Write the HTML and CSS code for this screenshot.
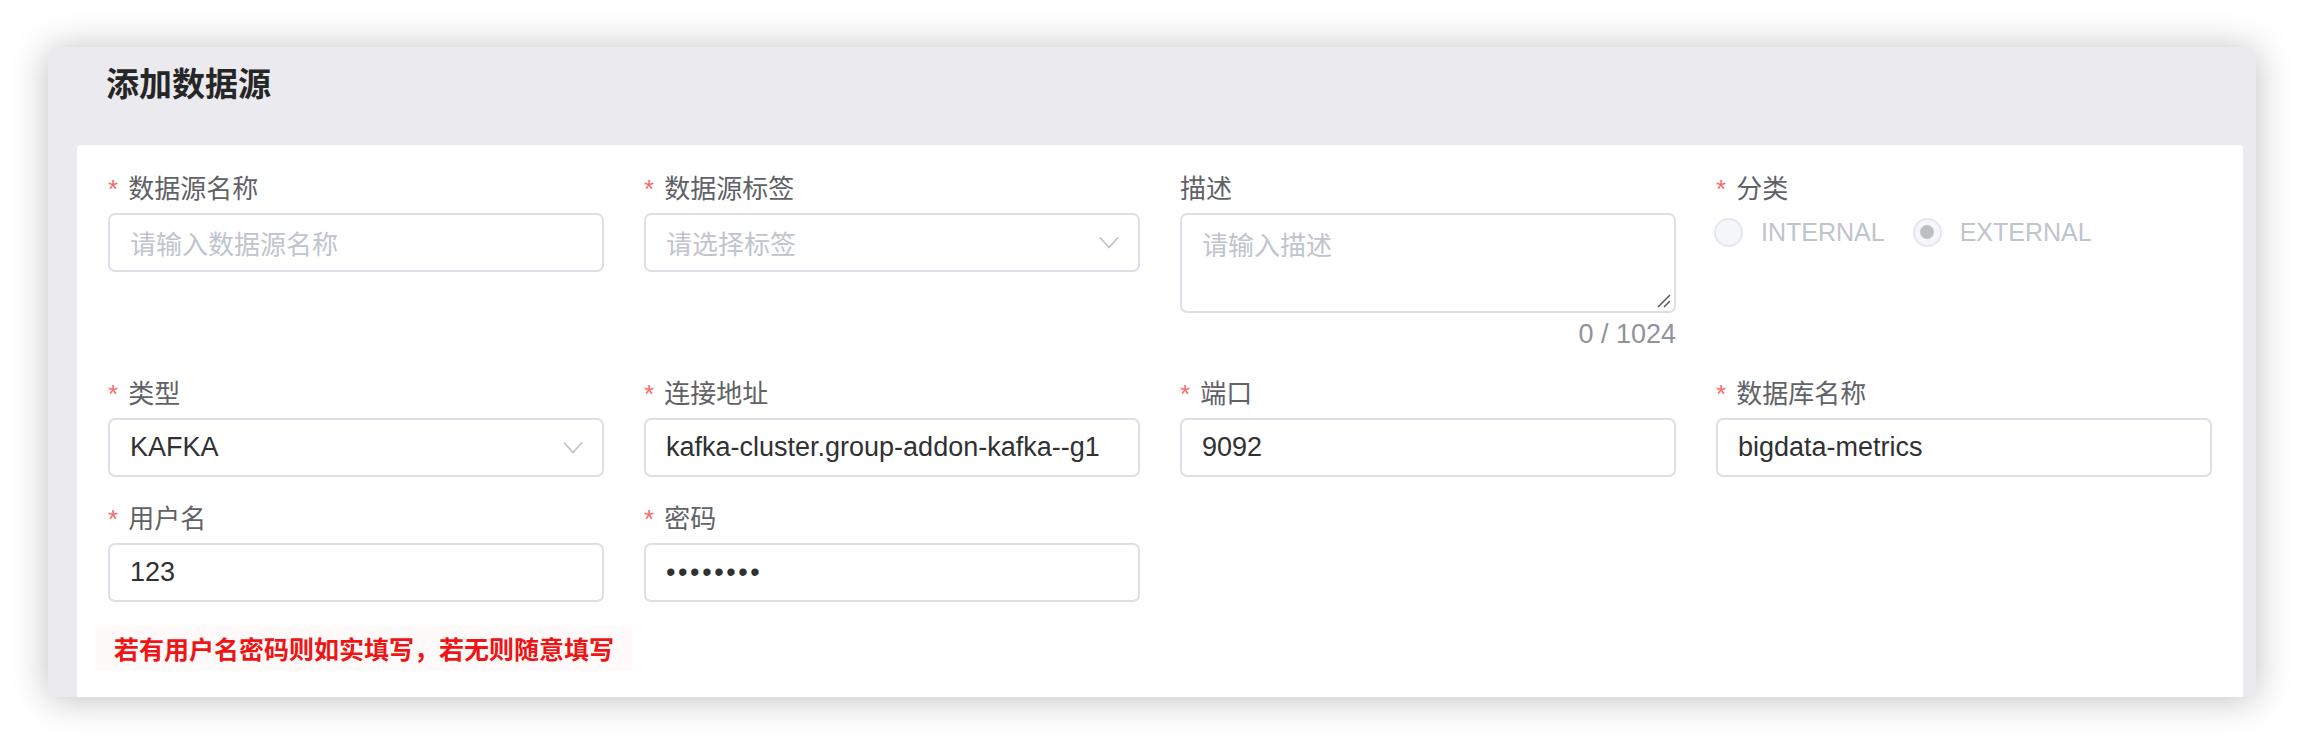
FILE: index.html
```html
<!DOCTYPE html>
<html lang="zh-CN">
<head>
<meta charset="utf-8">
<title>添加数据源</title>
<link rel="stylesheet" href="styles.css">
</head>
<body>
<div class="page">
  <div class="card">
    <div class="card-head"><h2 class="title">添加数据源</h2></div>
    <div class="panel">
      <div class="grid">
        <div class="item">
          <div class="label"><span class="star">*</span>数据源名称</div>
          <div class="input"><span class="ph">请输入数据源名称</span></div>
        </div>
        <div class="item">
          <div class="label"><span class="star">*</span>数据源标签</div>
          <div class="input select"><span class="val ph">请选择标签</span>
            <svg class="chev" width="20" height="13" viewBox="0 0 20 13"><polyline points="1,1.5 10,11.5 19,1.5" fill="none" stroke="#c0c4cc" stroke-width="1.8"/></svg>
          </div>
        </div>
        <div class="item">
          <div class="label">描述</div>
          <div class="textarea"><span class="ph">请输入描述</span>
            <svg class="grip" width="14" height="14" viewBox="0 0 14 14"><line x1="1" y1="13" x2="13" y2="1" stroke="#555" stroke-width="1.4"/><line x1="7" y1="13" x2="13" y2="7" stroke="#555" stroke-width="1.4"/></svg>
          </div>
          <div class="counter">0 / 1024</div>
        </div>
        <div class="item">
          <div class="label"><span class="star">*</span>分类</div>
          <div class="radios">
            <span class="radio"><span class="dot"></span><span class="rtext">INTERNAL</span></span>
            <span class="radio"><span class="dot checked"></span><span class="rtext">EXTERNAL</span></span>
          </div>
        </div>

        <div class="item">
          <div class="label"><span class="star">*</span>类型</div>
          <div class="input select"><span class="val">KAFKA</span>
            <svg class="chev" width="20" height="13" viewBox="0 0 20 13"><polyline points="1,1.5 10,11.5 19,1.5" fill="none" stroke="#c0c4cc" stroke-width="1.8"/></svg>
          </div>
        </div>
        <div class="item">
          <div class="label"><span class="star">*</span>连接地址</div>
          <div class="input"><span class="val">kafka-cluster.group-addon-kafka--g1</span></div>
        </div>
        <div class="item">
          <div class="label"><span class="star">*</span>端口</div>
          <div class="input"><span class="val">9092</span></div>
        </div>
        <div class="item">
          <div class="label"><span class="star">*</span>数据库名称</div>
          <div class="input"><span class="val">bigdata-metrics</span></div>
        </div>

        <div class="item">
          <div class="label"><span class="star">*</span>用户名</div>
          <div class="input"><span class="val">123</span></div>
        </div>
        <div class="item">
          <div class="label"><span class="star">*</span>密码</div>
          <div class="input"><span class="val pwd">••••••••</span></div>
        </div>
      </div>
      <div class="hint">若有用户名密码则如实填写，若无则随意填写</div>
    </div>
  </div>
</div>
</body>
</html>
```

FILE: styles.css
```css
html, body {
  margin: 0;
  padding: 0;
  background: #ffffff;
}
body {
  font-family: "Liberation Sans", "Noto Sans CJK SC", sans-serif;
  width: 2304px;
  height: 745px;
  overflow: hidden;
}
.page {
  padding: 47px 48px 0 48px;
}
.card {
  height: 650px;
  background: #ebeaef;
  border-radius: 10px;
  box-shadow: 0 2px 36px rgba(0, 0, 0, 0.26);
  padding: 0 13px 0 29px;
  display: flex;
  flex-direction: column;
  overflow: hidden;
}
.card-head {
  height: 98px;
  flex: none;
  box-sizing: border-box;
  padding: 15px 0 0 29px;
}
.title {
  margin: 0;
  font-family: "Noto Sans CJK SC", sans-serif;
  font-size: 33px;
  line-height: 40px;
  font-weight: 700;
  color: #262626;
}
.panel {
  flex: 1;
  background: #ffffff;
  border-radius: 4px 4px 0 0;
  padding: 26px 31px 0 31px;
}
.grid {
  display: grid;
  grid-template-columns: repeat(4, 496px);
  column-gap: 40px;
  align-items: start;
}
.item {
  margin-bottom: 24px;
}
.label {
  height: 36px;
  line-height: 36px;
  margin-bottom: 6px;
  font-size: 26px;
  color: #606266;
  white-space: nowrap;
}
.star {
  color: #f56c6c;
  margin-right: 10px;
}
.input {
  height: 59px;
  box-sizing: border-box;
  border: 2px solid #dcdfe6;
  border-radius: 7px;
  padding: 0 20px 0 20px;
  display: flex;
  align-items: center;
  font-size: 27px;
  color: #303133;
  background: #fff;
}
.input.select {
  padding-right: 19px;
}
.val {
  flex: 1;
  min-width: 0;
  overflow: hidden;
  white-space: nowrap;
}
.ph {
  font-family: "Noto Sans CJK SC", sans-serif;
  font-size: 26px;
  color: #c0c4cc;
  white-space: nowrap;
}
.pwd {
  letter-spacing: 2.6px;
}
.chev {
  flex: none;
  display: block;
}
.textarea {
  position: relative;
  height: 100px;
  box-sizing: border-box;
  border: 2px solid #dcdfe6;
  border-radius: 7px;
  padding: 9px 20px;
  line-height: 39px;
}
.grip {
  position: absolute;
  right: 3px;
  bottom: 3px;
}
.counter {
  height: 39px;
  box-sizing: border-box;
  padding-top: 4px;
  line-height: 35px;
  text-align: right;
  font-size: 27px;
  color: #909399;
}
.radios {
  height: 38px;
  display: flex;
  align-items: center;
  gap: 30px;
}
.radio {
  display: flex;
  align-items: center;
}
.dot {
  width: 29px;
  height: 29px;
  box-sizing: border-box;
  border: 2px solid #e4e7ed;
  border-radius: 50%;
  background: #f5f7fa;
  display: flex;
  align-items: center;
  justify-content: center;
  margin-left: -2px;
}
.dot.checked::after {
  content: "";
  width: 14px;
  height: 14px;
  border-radius: 50%;
  background: #bdbfc4;
}
.rtext {
  margin-left: 18px;
  font-size: 25px;
  color: #c0c4cc;
}
.hint {
  display: inline-block;
  margin-left: -12px;
  padding: 0 18px;
  height: 45px;
  line-height: 45px;
  background: #fefafa;
  font-family: "Noto Sans CJK SC", sans-serif;
  font-size: 25px;
  font-weight: 700;
  color: #f01414;
  white-space: nowrap;
}
```
